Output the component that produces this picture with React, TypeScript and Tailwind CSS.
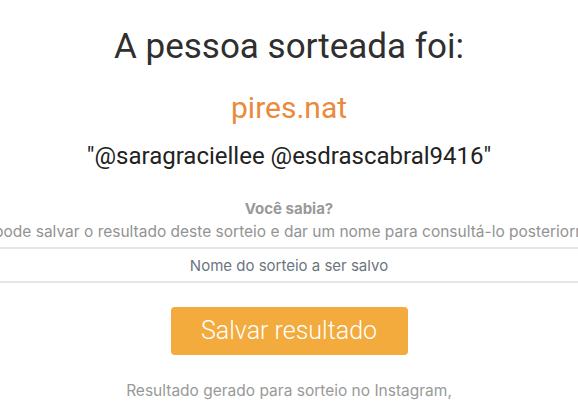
export default function App() {
  return (
    <div className="h-[420px] w-full overflow-hidden bg-white">
      <div className="flex flex-col items-center pt-[26px] text-center">
        <h1 className="font-['Roboto',sans-serif] text-[35px] leading-[42px] font-normal text-[#2f2f2f]">
          A pessoa sorteada foi:
        </h1>
        <div className="mt-[22px] font-['Roboto',sans-serif] text-[30px] leading-[36px] text-[#ea8a3c]">
          pires.nat
        </div>
        <div className="mt-[15px] font-['Roboto',sans-serif] text-[24px] leading-[30px] text-[#222]">
          "@saragraciellee @esdrascabral9416"
        </div>

        <div className="mt-[28px] font-['Inter',sans-serif] text-[15px] leading-[20px] font-bold text-[#999]">
          Você sabia?
        </div>
        <p className="mt-[2px] whitespace-nowrap font-['Inter',sans-serif] text-[15.5px] leading-[22px] text-[#939393]">
          Você pode salvar o resultado deste sorteio e dar um nome para consultá-lo posteriormente.
        </p>
        <input
          type="text"
          placeholder="Nome do sorteio a ser salvo"
          className="mt-[4px] h-[36px] w-[680px] shrink-0 border-2 border-[#e3e5e8] bg-white text-center font-['Inter',sans-serif] text-[15px] text-[#555] placeholder:text-[#6c757d] outline-none"
        />
        <button className="mt-[24px] h-[48px] w-[237px] rounded-[4px] bg-[#f2ab3c] font-['Roboto',sans-serif] text-[25px] font-light text-white">
          Salvar resultado
        </button>
        <p className="mt-[25px] font-['Inter',sans-serif] text-[15.5px] leading-[22px] text-[#999]">
          Resultado gerado para sorteio no Instagram,
        </p>
      </div>
    </div>
  )
}
